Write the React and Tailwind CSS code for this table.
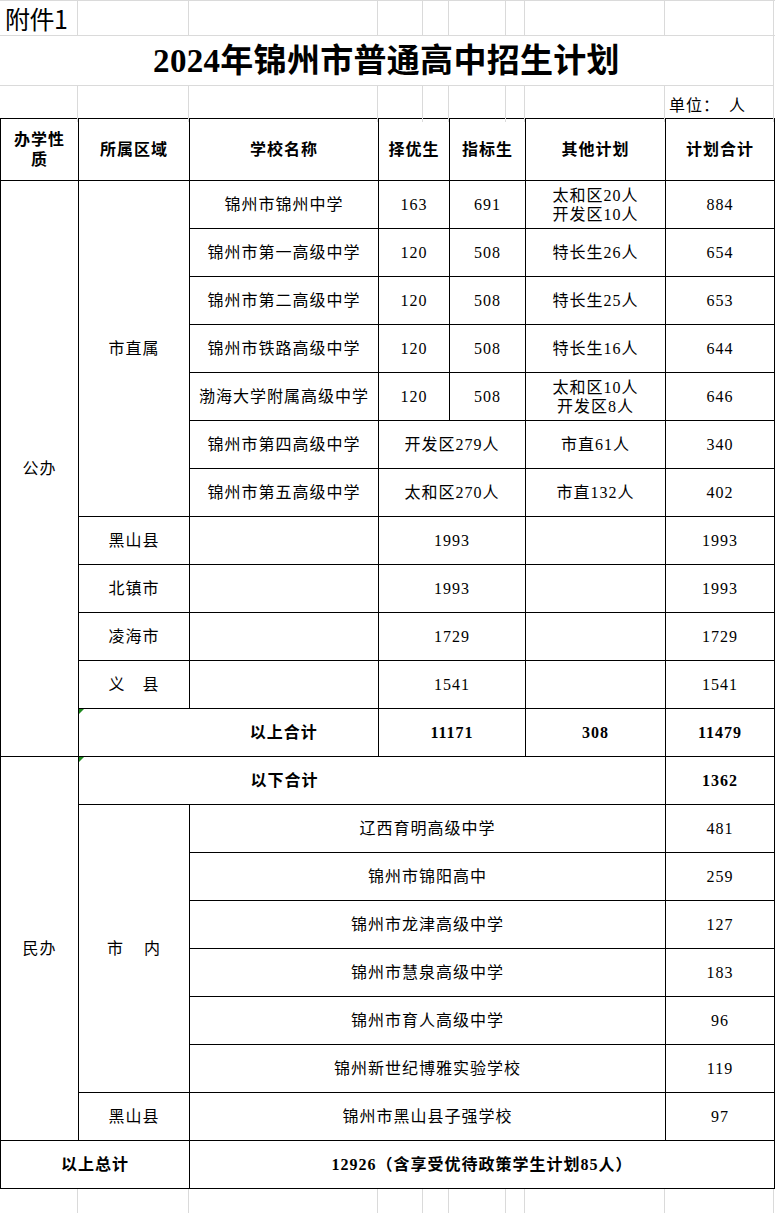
import React from 'react';

const cjk = "font-['Liberation_Serif','Noto_Sans_CJK_SC',serif]";
const cell = 'border border-black p-0 text-center align-middle';

const zhiShu = [
    { name: '锦州市锦州中学', a: '163', b: '691', other: ['太和区20人', '开发区10人'], total: '884' },
    { name: '锦州市第一高级中学', a: '120', b: '508', other: ['特长生26人'], total: '654' },
    { name: '锦州市第二高级中学', a: '120', b: '508', other: ['特长生25人'], total: '653' },
    { name: '锦州市铁路高级中学', a: '120', b: '508', other: ['特长生16人'], total: '644' },
    { name: '渤海大学附属高级中学', a: '120', b: '508', other: ['太和区10人', '开发区8人'], total: '646' },
    { name: '锦州市第四高级中学', merged: '开发区279人', other: ['市直61人'], total: '340' },
    { name: '锦州市第五高级中学', merged: '太和区270人', other: ['市直132人'], total: '402' },
];

const counties = [
    { region: '黑山县', n: '1993' },
    { region: '北镇市', n: '1993' },
    { region: '凌海市', n: '1729' },
    { region: '义　县', n: '1541' },
];

const minBan = [
    { name: '辽西育明高级中学', n: '481' },
    { name: '锦州市锦阳高中', n: '259' },
    { name: '锦州市龙津高级中学', n: '127' },
    { name: '锦州市慧泉高级中学', n: '183' },
    { name: '锦州市育人高级中学', n: '96' },
    { name: '锦州新世纪博雅实验学校', n: '119' },
];

// sheet gridline columns outside the table
const sheetCols = [78, 111, 189, 45, 26, 57, 19, 140, 109];

const GreenMark = () => (
    <span className="absolute left-0 top-0 w-0 h-0 border-t-[5px] border-r-[5px] border-t-[#1e8a1e] border-r-transparent" />
);

const SheetRow = ({ h, children }) => (
    <div className="grid grid-cols-[78px_111px_189px_45px_26px_57px_19px_140px_109px] border-b border-[#dadada]" style={{ height: h }}>
        {sheetCols.map((_, i) => (
            <div key={i} className="border-r border-[#dadada] overflow-visible">
                {children && children(i)}
            </div>
        ))}
    </div>
);

const App = () => {
    return (
        <div className={`w-[775px] bg-white text-black ${cjk}`}>
            {/* sheet header area */}
            <div className="border-t border-[#dadada]">
                <SheetRow h={35}>
                    {(i) =>
                        i === 0 ? (
                            <div className="font-['Noto_Sans_CJK_SC',sans-serif] text-[25px] leading-[34px] pl-[5px] tracking-[-0.5px] whitespace-nowrap">
                                附件1
                            </div>
                        ) : null
                    }
                </SheetRow>
                <div className="h-[50px] border-b border-r border-[#dadada] w-[774px] flex items-center justify-center">
                    <h1 className="text-[33px] font-bold leading-none pt-[2px] tracking-[0.3px]">2024年锦州市普通高中招生计划</h1>
                </div>
                <SheetRow h={33}>
                    {(i) =>
                        i === 8 ? (
                            <div className="text-[16px] leading-[33px] pl-[4px] pt-[3px] tracking-[1px] whitespace-nowrap">单位：　人</div>
                        ) : null
                    }
                </SheetRow>
            </div>

            {/* plan table */}
            <table className="w-[774px] table-fixed border-collapse -mt-px text-[16px] tracking-[1px]">
                <colgroup>
                    <col className="w-[78px]" />
                    <col className="w-[111px]" />
                    <col className="w-[189px]" />
                    <col className="w-[71px]" />
                    <col className="w-[76px]" />
                    <col className="w-[140px]" />
                    <col className="w-[109px]" />
                </colgroup>
                <thead>
                    <tr className="h-[62px] font-bold">
                        <td className={`${cell} leading-[20px]`}>办学性<br />质</td>
                        <td className={cell}>所属区域</td>
                        <td className={cell}>学校名称</td>
                        <td className={cell}>择优生</td>
                        <td className={cell}>指标生</td>
                        <td className={cell}>其他计划</td>
                        <td className={cell}>计划合计</td>
                    </tr>
                </thead>
                <tbody>
                    {zhiShu.map((s, i) => (
                        <tr key={s.name} className="h-[48px]">
                            {i === 0 && <td rowSpan={12} className={cell}>公办</td>}
                            {i === 0 && <td rowSpan={7} className={cell}>市直属</td>}
                            <td className={cell}>{s.name}</td>
                            {s.merged ? (
                                <td colSpan={2} className={cell}>{s.merged}</td>
                            ) : (
                                <>
                                    <td className={cell}>{s.a}</td>
                                    <td className={cell}>{s.b}</td>
                                </>
                            )}
                            <td className={`${cell} leading-[19px]`}>
                                {s.other.map((o) => (
                                    <div key={o}>{o}</div>
                                ))}
                            </td>
                            <td className={cell}>{s.total}</td>
                        </tr>
                    ))}
                    {counties.map((c) => (
                        <tr key={c.region} className="h-[48px]">
                            <td className={cell}>{c.region}</td>
                            <td className={cell}></td>
                            <td colSpan={2} className={cell}>{c.n}</td>
                            <td className={cell}></td>
                            <td className={cell}>{c.n}</td>
                        </tr>
                    ))}
                    <tr className="h-[48px] font-bold">
                        <td colSpan={2} className={`${cell} relative`}>
                            <GreenMark />
                            <div className="flex">
                                <div className="w-[111px]" />
                                <div className="w-[189px] text-center">以上合计</div>
                            </div>
                        </td>
                        <td colSpan={2} className={cell}>11171</td>
                        <td className={cell}>308</td>
                        <td className={cell}>11479</td>
                    </tr>

                    <tr className="h-[48px]">
                        <td rowSpan={8} className={cell}>民办</td>
                        <td colSpan={5} className={`${cell} relative font-bold`}>
                            <GreenMark />
                            <div className="flex">
                                <div className="w-[111px]" />
                                <div className="w-[189px] text-center">以下合计</div>
                            </div>
                        </td>
                        <td className={`${cell} font-bold`}>1362</td>
                    </tr>
                    {minBan.map((m, i) => (
                        <tr key={m.name} className="h-[48px]">
                            {i === 0 && (
                                <td rowSpan={6} className={cell}>
                                    市<span className="ml-[20px]">内</span>
                                </td>
                            )}
                            <td colSpan={4} className={cell}>{m.name}</td>
                            <td className={cell}>{m.n}</td>
                        </tr>
                    ))}
                    <tr className="h-[48px]">
                        <td className={cell}>黑山县</td>
                        <td colSpan={4} className={cell}>锦州市黑山县子强学校</td>
                        <td className={cell}>97</td>
                    </tr>
                    <tr className="h-[48px] font-bold">
                        <td colSpan={2} className={cell}>以上总计</td>
                        <td colSpan={5} className={cell}>12926（含享受优待政策学生计划85人）</td>
                    </tr>
                </tbody>
            </table>

            {/* empty sheet rows below */}
            <div className="grid grid-cols-[78px_111px_189px_45px_26px_57px_19px_140px_109px] h-[25px]">
                {sheetCols.map((_, i) => (
                    <div key={i} className="border-r border-[#dadada]" />
                ))}
            </div>
        </div>
    );
};

export default App;
